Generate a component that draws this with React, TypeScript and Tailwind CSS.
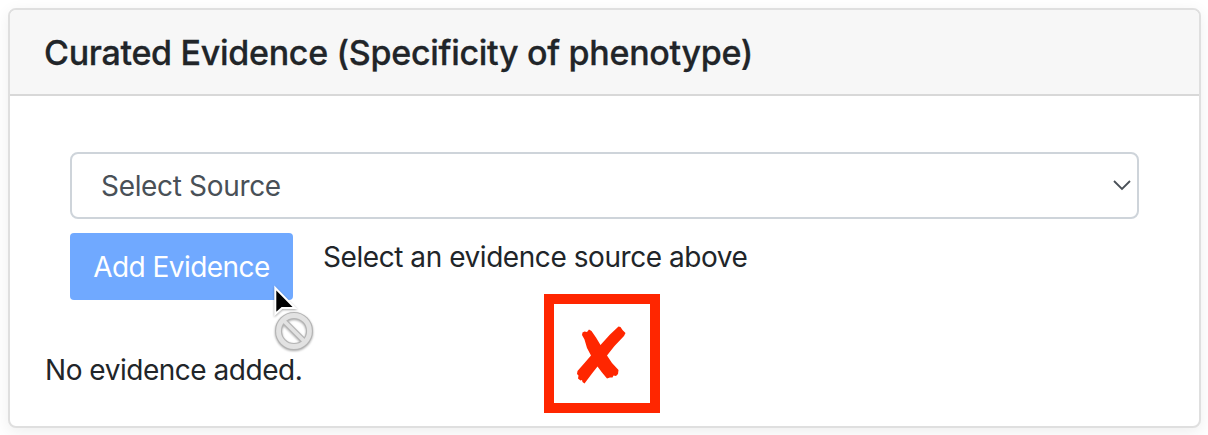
interface EvidenceCardProps {
  title: string;
  sources: string[];
}

const BlockedCursor = () => (
  <svg
    className="absolute left-[268px] top-[282px] pointer-events-none drop-shadow-[0_1px_1px_rgba(0,0,0,0.35)]"
    width="52"
    height="74"
    viewBox="0 0 52 74"
    fill="none"
  >
    <path d="M7.3 6V32L14 26H27Z" fill="#000" stroke="#fff" strokeWidth="2" />
    <circle cx="26" cy="49" r="15.5" stroke="#b4b4b4" strokeWidth="7" />
    <path d="M15 38L37 60" stroke="#b4b4b4" strokeWidth="6" />
    <circle cx="26" cy="49" r="15.5" stroke="#e2e2e2" strokeWidth="4.8" />
    <path d="M15 38L37 60" stroke="#e2e2e2" strokeWidth="3.8" />
  </svg>
);

const CrossMark = () => (
  <div className="absolute left-[544px] top-[294px] w-[116px] h-[119px] border-10 border-[#ff2600]">
    <svg className="w-24 h-[99px]" viewBox="554 304 96 99" fill="#ff2600">
      <path d="M582 335L582.5 332.5L584.5 331.5L587 332L589 329.5L591.5 331L596 337.5L600.5 345L610 334.5L618.5 326.5L620.5 327L622.5 330L625.5 333L624 336L614.5 346L607 355.5L612 363L618.5 370L618 374L616 376L613.5 375.5L612.5 377.5L610 377.5L607 378.5L602 372.5L597.5 366.5L592 373.5L584.5 383.5L582.5 382L582 380L580.5 380.5L578 378.5L578.5 375.5L577 374L577.5 371L584.5 363L591 355.5L587 348L584.5 339.5Z" />
    </svg>
  </div>
);

const EvidenceCard = ({ title, sources }: EvidenceCardProps) => {
  return (
    <div className="h-[420px] w-[1193px] rounded-lg border-2 border-[#dfdfdf] bg-white shadow-[0_4px_16px_rgba(0,0,0,0.07)]">
      <div className="flex h-[86px] items-center rounded-t-md border-b-2 border-[#d8d8d8] bg-[#f7f7f7] px-[34px]">
        <h5 className="text-[34px] font-medium tracking-[-0.3px] [-webkit-text-stroke:0.3px_#212529]">{title}</h5>
      </div>

      <div className="px-[35px] pt-14">
        <div className="px-[25px]">
          <div className="grid items-center">
            <select className="col-start-1 row-start-1 h-[67px] w-[1069px] appearance-none rounded-lg border-2 border-[#ced4da] bg-white px-[29px] text-[28px] tracking-[-0.33px] text-[#495057]">
              {sources.map((source) => (
                <option key={source}>{source}</option>
              ))}
            </select>
            <svg
              className="pointer-events-none col-start-1 row-start-1 ml-[1043px] h-3 w-[18px]"
              viewBox="0 0 18 12"
              fill="none"
              stroke="#495057"
              strokeWidth="1.8"
            >
              <path d="M1 1L9 9L17 1" />
            </svg>
          </div>

          <div className="mt-3.5 flex gap-[30px]">
            <button
              disabled
              className="h-[67px] w-[223px] rounded bg-[#70a9ff] text-[28px] tracking-[-0.55px] text-white"
            >
              Add Evidence
            </button>
            <p className="pt-[3px] text-[28px] leading-[42px] tracking-[-0.44px]">
              Select an evidence source above
            </p>
          </div>
        </div>

        <p className="mt-[49px] text-[28px] leading-[42px] tracking-[-0.47px]">No evidence added.</p>
      </div>
    </div>
  );
};

export default function App() {
  return (
    <div className="relative h-[435px] w-[1208px] overflow-hidden bg-white p-2 font-['Inter','Liberation_Sans',sans-serif] text-[#212529]">
      <EvidenceCard title="Curated Evidence (Specificity of phenotype)" sources={["Select Source"]} />
      <CrossMark />
      <BlockedCursor />
    </div>
  );
}
